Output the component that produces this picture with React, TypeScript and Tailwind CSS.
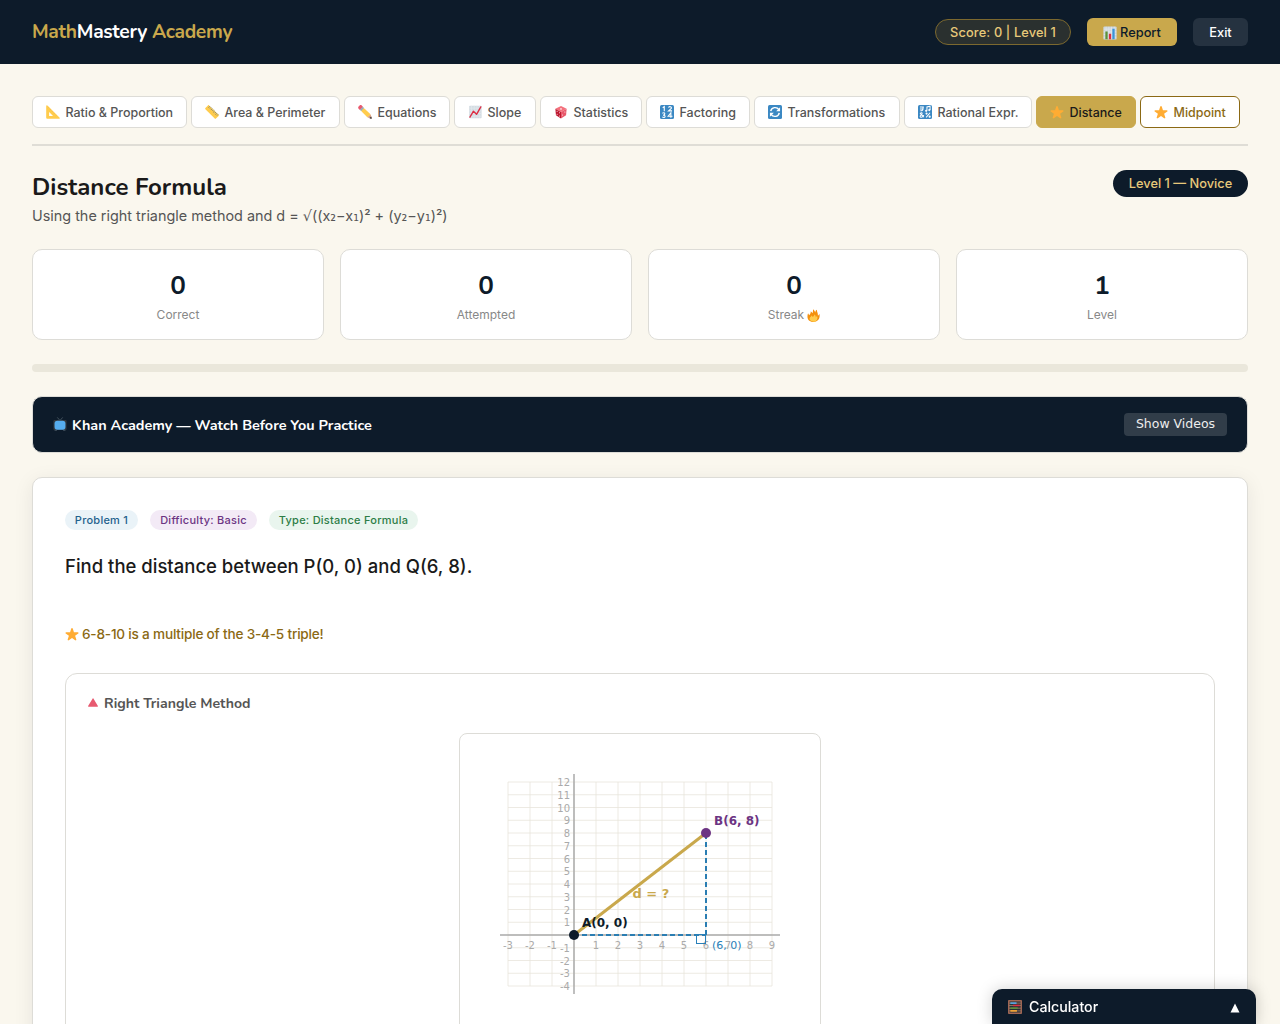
import React from 'react';

type IconProps = { className?: string };

const svgProps = (className?: string) => ({ viewBox: '0 0 36 36', className: className ?? 'size-[14px] shrink-0', 'aria-hidden': true });

const Star = ({ className }: IconProps) => (
  <svg {...svgProps(className)}>
    <path fill="#FFAC33" d="M27.3 34.6c-.4 0-.8-.1-1.2-.4L18 28.4l-8.1 5.800c-.7.5-1.600.5-2.300 0s-1-1.400-.7-2.200L10 22.600l-8.100-5.800c-.7-.5-1-1.400-.7-2.200.3-.8 1-1.300 1.800-1.300h10L16.100 3.700c.3-.8 1-1.300 1.900-1.300s1.600.5 1.900 1.300L23 13.300h10c.8 0 1.600.5 1.800 1.300.3.8 0 1.700-.7 2.200L26 22.600l3.100 9.500c.3.800 0 1.700-.7 2.200-.3.200-.7.300-1.100.3z" />
  </svg>
);

const SetSquare = ({ className }: IconProps) => (
  <svg {...svgProps(className)}>
    <path fill="#FFCC4D" fillRule="evenodd" d="M3 1C1.500.5.5 1.500.5 3v30c0 1.500 1 2.500 2.500 2.500h30c2.500 0 3.200-2 1.500-3.500L4.500 2 3 1zM8 18l10 10H8V18z" />
    <path stroke="#C1694F" strokeWidth="1" d="M7 6l-2 2M12 11l-2 2M17 16l-2 2M22 21l-2 2M27 26l-2 2" opacity=".35" />
  </svg>
);

const Ruler = ({ className }: IconProps) => (
  <svg {...svgProps(className)}>
    <path fill="#FFCC4D" d="M10.500 1 35 25c1 1 1 2 0 3l-7 7c-1 1-2 1-3 0L1 11c-1-1-1-2 0-3l6.500-7c1-1 2-1 3 0z" />
    <path stroke="#66757F" strokeWidth="2" d="m13 3-4 4m7-1-3 3m6 0-4 4m7-1-3 3m6 0-4 4m7-1-3 3m6 0-4 4m7-1-3 3" />
  </svg>
);

const Pencil = ({ className }: IconProps) => (
  <svg {...svgProps(className)}>
    <path fill="#D99E82" d="M35.200 33.700c.3 1-.6 1.900-1.500 1.500l-9.700-3.400 8-8 3.200 9.900z" />
    <path fill="#EA596E" d="M1.500 9.500c-1.500-1.600-1.500-4 0-5.500l2.600-2.600c1.500-1.500 4-1.500 5.500 0L13 5 5 13 1.500 9.500z" />
    <path fill="#FFCC4D" d="M7.500 15 15 7.500l17.200 16.300-8.200 8L7.500 15z" />
    <path fill="#99AAB5" d="m4.500 12.200 7.700-7.700 3.500 3.500L8 15.700z" />
    <path fill="#292F33" d="m35.200 33.700-1.300-4-4.200 4.100 4 1.400c1 .4 1.800-.5 1.500-1.500z" />
  </svg>
);

const Trend = ({ className }: IconProps) => (
  <svg {...svgProps(className)}>
    <rect x="3" y="2" width="32" height="32" rx="2" fill="#D3DCE2" />
    <path stroke="#E1E8ED" strokeWidth="2" d="M3 8h31M3 15h31M3 22h31M3 29h31M9 2v31M16 2v31M23 2v31M30 2v31" />
    <path fill="none" stroke="#DD2E44" strokeWidth="3.500" strokeLinecap="round" strokeLinejoin="round" d="m5 31 9-15 8 8L33 5" />
  </svg>
);

const Die = ({ className }: IconProps) => (
  <svg {...svgProps(className)}>
    <path fill="#F4707C" d="M18 2.500 3.500 9.500 18 18l14.500-8.500z" />
    <path fill="#BE1931" d="M3.500 9.500 5 26.500l13 8V18z" />
    <path fill="#E8586A" d="M32.500 9.500 31 26.500l-13 8V18z" />
    <g fill="#fff">
      <ellipse cx="18" cy="10" rx="2.500" ry="1.400" /><circle cx="8" cy="16" r="1.300" /><circle cx="14" cy="20" r="1.300" />
      <circle cx="8" cy="24" r="1.300" /><circle cx="14" cy="28" r="1.300" /><circle cx="22" cy="26" r="1.300" /><circle cx="28" cy="18" r="1.300" />
    </g>
  </svg>
);

const BlueTile = ({ className, children }: IconProps & { children: React.ReactNode }) => (
  <svg {...svgProps(className)}>
    <rect width="36" height="36" rx="4" fill="#3B88C3" />
    {children}
  </svg>
);

const Numbers = () => (
  <BlueTile>
    <g fill="none" stroke="#fff" strokeWidth="2.800">
      <path d="m7 7 4-3v12M22 7c1-5 9-3 7 2l-7 6h9" />
      <path d="M6 21c8-4 8 5 2 5 8 0 6 9-2 5M28 33V20l-7 9h11" />
    </g>
  </BlueTile>
);

const Cycle = () => (
  <BlueTile>
    <g fill="none" stroke="#fff" strokeWidth="3.600">
      <path d="M7 16C9 5 23 4 28 12M29 20C27 31 13 32 8 24" />
    </g>
    <path fill="#fff" d="M31 6v10H21zM5 30V20h10z" />
  </BlueTile>
);

const Symbols = () => (
  <BlueTile>
    <g fill="none" stroke="#fff" strokeWidth="2.600">
      <path d="M5 5h10M5 10h9M13 4v5c0 5-3 6-7 6M23 15V5l8-2v10" />
      <circle cx="21" cy="15" r="1.500" /><circle cx="29" cy="13" r="1.500" />
      <path d="M15 31 6 22c2-5 8-1 2 4-7 5 3 9 7 0M31 20 21 32" />
      <circle cx="22" cy="22" r="1.500" /><circle cx="30" cy="30" r="1.500" />
    </g>
  </BlueTile>
);

const Bars = ({ className }: IconProps) => (
  <svg {...svgProps(className)}>
    <rect x="1" y="1" width="34" height="34" rx="3" fill="#CCD6DD" />
    <path stroke="#E1E8ED" strokeWidth="2" d="M2 8h32M2 15h32M2 22h32M2 29h32M8 2v32M15 2v32M22 2v32M29 2v32" />
    <path fill="#5C913B" d="M6 14h6v20H6z" /><path fill="#DD2E44" d="M15 20h6v14h-6z" /><path fill="#3B94D9" d="M24 7h6v27h-6z" />
  </svg>
);

const Fire = ({ className }: IconProps) => (
  <svg {...svgProps(className)}>
    <path fill="#F4900C" d="M35 19c0-2-.4-4-1-6-.5 3-2 5-4 6 1-7-2-10-3-17-3 2-4 5-4 8-1-3-3-6-5-9-2 3-1 7-3 11-1-2-2-4-5-5 1 4-1 7-4 10-1-1-2-3-3-5-5 13 1 24 15 24 9 0 17-6 17-17z" />
    <path fill="#FFCC4D" d="M29 24c0-2-1-4-2-6 0 3-2 5-3 5 1-3-1-6-3-8-1 3-3 5-5 7-1-2-3-3-4-4 0 4-5 5-5 9 0 5 6 8 12 8 6 0 10-5 10-11z" />
  </svg>
);

const Tv = ({ className }: IconProps) => (
  <svg {...svgProps(className)}>
    <path stroke="#66757F" strokeWidth="1.500" d="m18 9-7-8m7 8 7-8" />
    <rect x="1" y="8" width="34" height="25" rx="3" fill="#31373D" /><path fill="#66757F" d="M4 33h6v2H4zM26 33h6v2h-6z" />
    <rect x="4" y="9.500" width="28" height="23" rx="7" fill="#55ACEE" />
  </svg>
);

const Abacus = ({ className }: IconProps) => (
  <svg {...svgProps(className)}>
    <rect x="2" y="2" width="32" height="32" fill="#292F33" stroke="#C1795F" strokeWidth="3" />
    <path stroke="#D99E82" strokeWidth="1.500" d="M3 8h30M3 14h30M3 21h30M3 28h30" />
    <path stroke="#55ACEE" strokeWidth="4" d="M6 8h16" /><path stroke="#DD2E44" strokeWidth="4" d="M13 14h17" />
    <path stroke="#5C913B" strokeWidth="4" d="M6 21h19" /><path stroke="#FFAC33" strokeWidth="4" d="M6 28h17" />
  </svg>
);

const tabs: { label: string; icon: React.ReactNode; cls: string }[] = [
  { label: 'Ratio & Proportion', icon: <SetSquare />, cls: 'w-[155px] border-[#dddcd7] bg-white text-[#555]' },
  { label: 'Area & Perimeter', icon: <Ruler />, cls: 'w-[149px] border-[#dddcd7] bg-white text-[#555]' },
  { label: 'Equations', icon: <Pencil />, cls: 'w-[106px] border-[#dddcd7] bg-white text-[#555]' },
  { label: 'Slope', icon: <Trend />, cls: 'w-[82px] border-[#dddcd7] bg-white text-[#555]' },
  { label: 'Statistics', icon: <Die />, cls: 'w-[102px] border-[#dddcd7] bg-white text-[#555]' },
  { label: 'Factoring', icon: <Numbers />, cls: 'w-[104px] border-[#dddcd7] bg-white text-[#555]' },
  { label: 'Transformations', icon: <Cycle />, cls: 'w-[146px] border-[#dddcd7] bg-white text-[#555]' },
  { label: 'Rational Expr.', icon: <Symbols />, cls: 'w-[128px] border-[#dddcd7] bg-white text-[#555]' },
  { label: 'Distance', icon: <Star />, cls: 'w-[100px] border-[#c9a84c] bg-[#c9a84c] text-[#1a1a1a]' },
  { label: 'Midpoint', icon: <Star />, cls: 'w-[100px] border-[#8b6914] bg-white text-[#8b6914]' },
];

const stats = [
  { value: '0', label: 'Correct' },
  { value: '0', label: 'Attempted' },
  { value: '0', label: 'Streak', fire: true },
  { value: '1', label: 'Level' },
];

const xs = Array.from({ length: 13 }, (_, i) => i - 3);
const ys = Array.from({ length: 17 }, (_, i) => i - 4);
const px = (x: number) => 114 + x * 22;
const py = (y: number) => 201 - y * 12.75;

function Graph() {
  return (
    <svg width="360" height="300" viewBox="0 0 360 300" fontFamily="DejaVu Sans, sans-serif">
      {xs.map((x) => <line key={x} x1={px(x)} x2={px(x)} y1="48" y2="252" stroke="#e8e5dc" strokeWidth="0.8" />)}
      {ys.map((y) => <line key={y} x1="48" x2="312" y1={py(y)} y2={py(y)} stroke="#e8e5dc" strokeWidth="0.8" />)}
      <path d="M40 201H320M114 40V260" stroke="#aaa" strokeWidth="1.5" />
      <g fill="#aaa" fontSize="10">
        {xs.filter((x) => x !== 0).map((x) => <text key={x} x={px(x)} y="215" textAnchor="middle">{x}</text>)}
        {ys.filter((y) => y !== 0).map((y) => <text key={y} x="110" y={py(y) + 4} textAnchor="end">{y}</text>)}
      </g>
      <path d="M114 201H246M246 201V99" stroke="#2a7db2" strokeWidth="2" strokeDasharray="5,3" />
      <path d="M114 201 246 99" stroke="#c9a84c" strokeWidth="3" />
      <rect x="236.500" y="200.500" width="9" height="9" fill="none" stroke="#2980b9" />
      <circle cx="114" cy="201" r="5" fill="#0d1b2a" />
      <circle cx="246" cy="99" r="5" fill="#6c3483" />
      <g fontSize="12" fontWeight="bold">
        <text x="122" y="193" fill="#0d1b2a">A(0, 0)</text>
        <text x="254" y="91" fill="#6c3483">B(6, 8)</text>
        <text x="172.500" y="164" fontSize="13" fill="#c9a84c">d = ?</text>
      </g>
      <text x="252" y="215" fontSize="11" fill="#2980b9">(6, 0)</text>
    </svg>
  );
}

const Sub = ({ children }: { children: React.ReactNode }) => <span className="font-['DejaVu_Sans']">{children}</span>;

export default function App() {
  return (
    <div className="h-[1024px] overflow-hidden bg-[#faf7ee] font-['Inter',sans-serif] text-[#1a1a1a]">
      <header className="flex h-16 items-center justify-between bg-[#0d1b2a] px-8">
        <div className="font-['Nunito',sans-serif] text-[19.200px] font-bold tracking-[-0.3px] text-[#c9a84c]">
          Math<span className="text-white">Mastery</span> Academy
        </div>
        <div className="flex items-center gap-4 text-[12.800px] font-medium">
          <div className="flex h-[26px] w-[136px] items-center justify-center whitespace-nowrap rounded-full border border-[#7c692f] bg-[#2a302f] pt-px tracking-[0.13px] text-[#e8c97a]">Score: 0 | Level 1</div>
          <button className="flex h-7 w-[90px] items-center justify-center gap-[3px] rounded-md bg-[#c9a84c] pt-px text-[#0d1b2a]"><Bars />Report</button>
          <button className="h-7 w-[55px] rounded-md bg-[#253240] pt-px text-white">Exit</button>
        </div>
      </header>
      <main className="px-8 pt-8">
        <nav className="flex h-[50px] gap-1 border-b-2 border-[#dfddd6]">
          {tabs.map((t) => (
            <button key={t.label} className={`flex h-8 shrink-0 items-center gap-[6px] whitespace-nowrap rounded-md border pl-[12.500px] text-[12.480px] font-medium ${t.cls}`}>
              {t.icon}<span className="pt-[2px]">{t.label}</span>
            </button>
          ))}
        </nav>
        <section className="mt-6 flex items-start justify-between">
          <div>
            <h1 className="pt-px font-['Nunito',sans-serif] text-[24px] font-bold leading-[33px]">Distance Formula</h1>
            <p className="mt-px text-[14.400px] leading-[22px] text-[#555]">
              Using the right triangle method and d = <Sub>√</Sub>((x<Sub>₂</Sub>−x<Sub>₁</Sub>)² + (y<Sub>₂</Sub>−y<Sub>₁</Sub>)²)
            </p>
          </div>
          <div className="flex h-[27px] w-[135px] items-center justify-center whitespace-nowrap rounded-full bg-[#0d1b2a] text-[12.800px] font-medium text-[#e8c97a]">Level 1 — Novice</div>
        </section>
        <section className="mt-[22px] grid grid-cols-4 gap-4">
          {stats.map((s) => (
            <div key={s.label} className="flex h-[91px] flex-col items-center rounded-[10px] border border-[#dddcd7] bg-white pt-[18px]">
              <div className="font-['Nunito',sans-serif] text-[26px] font-bold leading-[36px] text-[#0d1b2a]">{s.value}</div>
              <div className="mt-[2px] flex items-center gap-[3px] text-[12px] leading-[18px] text-[#888]">{s.label}{s.fire && <Fire className="size-[13px]" />}</div>
            </div>
          ))}
        </section>
        <div className="mt-6 h-2 rounded-full bg-[#eae7db]" />
        <section className="mt-6 flex h-[57px] items-center justify-between rounded-[10px] border border-[#dddcd7] bg-[#0d1b2a] px-5">
          <div className="flex items-center gap-[5px] font-['Nunito',sans-serif] text-[14.400px] font-bold text-white"><Tv /><span className="pt-[3px]">Khan Academy — Watch Before You Practice</span></div>
          <button className="mb-px h-[23px] w-[103px] rounded bg-[#313d49] font-['DejaVu_Sans'] text-[12.500px] text-[#eee]">Show Videos</button>
        </section>
        <section className="mt-6 h-[700px] rounded-[10px] border border-[#dddcd7] bg-white px-8 pt-8 shadow-[0_4px_20px_rgba(13,27,42,0.08)]">
          <div className="flex gap-3 text-[11px] font-medium leading-5 tracking-[0.25px]">
            <span className="w-[73px] rounded-full bg-[#eaf3f8] text-center text-[#1f618d]">Problem 1</span>
            <span className="w-[107px] rounded-full bg-[#f3eaf6] text-center text-[#6c3483]">Difficulty: Basic</span>
            <span className="w-[149px] rounded-full bg-[#e9f5ee] text-center text-[#2d7d46]">Type: Distance Formula</span>
          </div>
          <h2 className="mt-5 text-[18.500px] font-medium leading-[32px]">Find the distance between P(0, 0) and Q(6, 8).</h2>
          <p className="mt-[42px] flex items-center gap-[3px] text-[13.600px] font-medium leading-[20px] tracking-[-0.2px] text-[#8b6914]"><Star />6-8-10 is a multiple of the 3-4-5 triple!</p>
          <div className="mt-[29px] h-[400px] rounded-xl border border-[#dddcd7] px-5 pt-[19px]">
            <h3 className="flex h-5 items-center gap-1 font-['Nunito',sans-serif] text-[14.080px] font-bold text-[#555]">
              <svg viewBox="0 0 14 14" className="size-[14px]"><path fill="#E75A70" d="M6.700 2.500c.2-.4.500-.4.700 0l4.500 7.500c.2.400 0 .7-.5.7H2.600c-.5 0-.7-.3-.5-.7z" /></svg>
              <span className="pt-[2px]">Right Triangle Method</span>
            </h3>
            <div className="mx-auto mt-5 h-[330px] w-[362px] rounded-lg border border-[#dddcd7]"><Graph /></div>
          </div>
        </section>
      </main>
      <button className="fixed bottom-0 right-6 flex h-[35px] w-[264px] items-center rounded-t-[10px] bg-[#0d1b2a] px-4 text-[14.200px] font-medium text-white shadow-[0_0_16px_rgba(0,0,0,0.18)]">
        <Abacus /><span className="ml-[7px]">Calculator</span>
        <svg viewBox="0 0 10 10" className="ml-auto mt-[2px] size-[10px]"><path fill="#fff" d="M5 0.500 9.500 9.500H.5z" /></svg>
      </button>
    </div>
  );
}
